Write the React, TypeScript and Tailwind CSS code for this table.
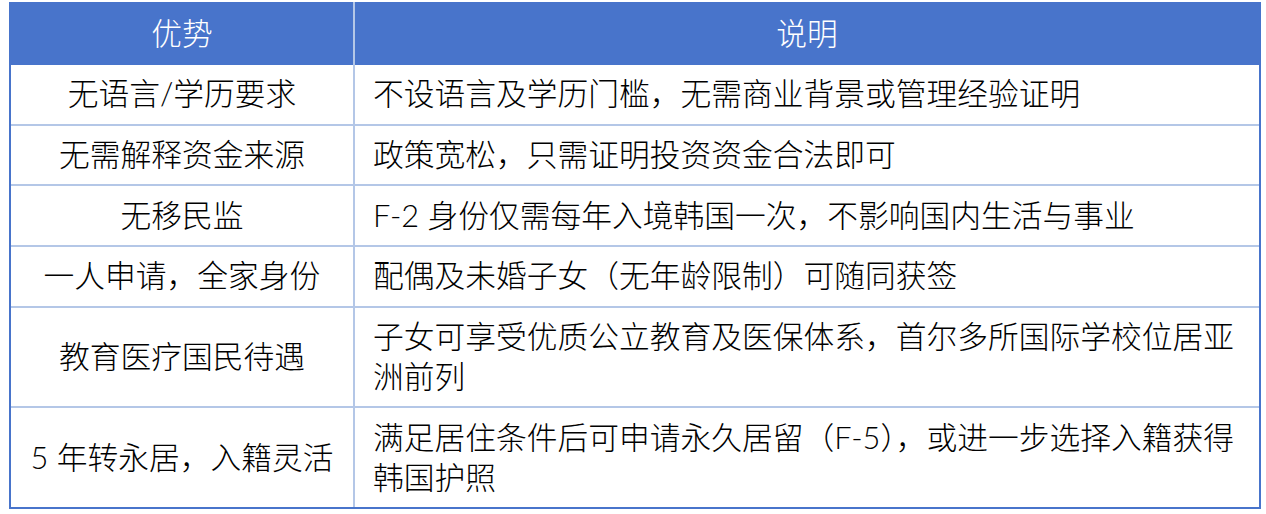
import React from "react";

const rows: { a: string; b: string }[] = [
  { a: "无语言/学历要求", b: "不设语言及学历门槛，无需商业背景或管理经验证明" },
  { a: "无需解释资金来源", b: "政策宽松，只需证明投资资金合法即可" },
  { a: "无移民监", b: "F-2 身份仅需每年入境韩国一次，不影响国内生活与事业" },
  { a: "一人申请，全家身份", b: "配偶及未婚子女（无年龄限制）可随同获签" },
  { a: "教育医疗国民待遇", b: "子女可享受优质公立教育及医保体系，首尔多所国际学校位居亚洲前列" },
  { a: "5 年转永居，入籍灵活", b: "满足居住条件后可申请永久居留（F-5），或进一步选择入籍获得韩国护照" },
];

export default function App() {
  return (
    <div className="bg-white w-[1266px] h-[514px] pt-[2px] pl-[9px]">
      <div className="w-[1252px] border-x-2 border-b-2 border-[#4874cb] font-[family-name:Lato,'Noto_Sans_CJK_SC',sans-serif] font-light text-[30.75px] leading-[40px] text-black">
        <div className="flex h-[63px] bg-[#4874cb] text-white">
          <div className="w-[344px] shrink-0 border-r-2 border-[#b4c7e7] flex items-center justify-center">
            优势
          </div>
          <div className="flex-1 flex items-center justify-center">说明</div>
        </div>
        {rows.map((r, i) => (
          <div
            key={i}
            className={
              i < rows.length - 1
                ? "flex border-b-2 border-[#b4c7e7]"
                : "flex"
            }
          >
            <div className="w-[344px] shrink-0 border-r-2 border-[#b4c7e7] flex items-center justify-center text-center py-[9.33px]">
              {r.a}
            </div>
            <div className="flex-1 flex items-center pl-[18px] pr-[10px] py-[9.33px]">
              <span>{r.b}</span>
            </div>
          </div>
        ))}
      </div>
    </div>
  );
}
